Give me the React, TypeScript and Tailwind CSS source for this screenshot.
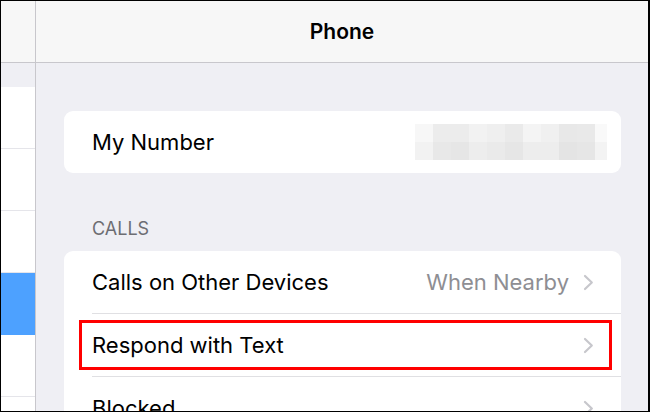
import { ReactNode } from "react";

const blurTop = ["#f7f7f7", "#ececec", "#ececec", "#f2f2f2", "#efefef", "#eaeaea", "#f4f4f4", "#f0f0f0", "#e8e8e8", "#e9e9e9", "#f9f9f9"];
const blurBottom = ["#f2f2f2", "#e8e8e8", "#e6e6e6", "#ededed", "#eaeaea", "#e6e6e6", "#ededed", "#ededed", "#e4e4e4", "#e6e6e6", "#f3f3f3"];

const Chevron = () => (
  <svg width="11" height="17" viewBox="0 0 11 17" fill="none" className="shrink-0">
    <path d="M2 2 L8.8 8.5 L2 15" stroke="#c7c7cc" strokeWidth="2.2" strokeLinecap="round" strokeLinejoin="round" />
  </svg>
);

const Row = ({ label, value, children }: { label: string; value?: string; children?: ReactNode }) => (
  <div className="relative flex h-[62px] items-center justify-between pl-[28px] pr-[27px]">
    <span className="text-[22px] text-black">{label}</span>
    <div className="flex items-center gap-[14px]">
      {value && <span className="text-[22px] text-[#8e8e93]">{value}</span>}
      <Chevron />
    </div>
    {children}
  </div>
);

const Separator = () => <div className="ml-[28px] h-px bg-[#e0e0e3]" />;

export default function App() {
  return (
    <div
      className="flex h-[412px] w-[650px] overflow-hidden border-y border-l border-r-2 border-black bg-[#efeff4]"
      style={{ fontFamily: "Inter, 'Liberation Sans', sans-serif" }}
    >
      {/* sidebar */}
      <div className="flex w-[35px] shrink-0 flex-col border-r border-[#c8c7cc] bg-white">
        <div className="h-[62px] shrink-0 border-b border-[#c8c7cc] bg-[#f7f7f7]" />
        <div className="h-[24px] shrink-0 bg-[#efeff4]" />
        <div className="h-[62px] shrink-0 border-b border-[#e5e5ea]" />
        <div className="h-[62px] shrink-0 border-b border-[#e5e5ea]" />
        <div className="h-[62px] shrink-0 border-b border-[#e5e5ea]" />
        <div className="h-[62px] shrink-0 bg-[#4da1ff]" />
        <div className="h-[62px] shrink-0 border-b border-[#e5e5ea]" />
      </div>

      {/* main panel */}
      <div className="flex flex-1 flex-col">
        <div className="flex h-[62px] shrink-0 items-center justify-center border-b border-[#c8c7cc] bg-[#f7f7f7]">
          <span className="text-[21px] font-semibold text-black">Phone</span>
        </div>

        <div className="pl-[28px] pr-[27px] pt-[48px]">
          <div className="flex h-[62px] items-center justify-between rounded-[9px] bg-white pl-[28px] pr-[14px]">
            <span className="text-[22px] text-black">My Number</span>
            <div className="flex flex-col">
              <div className="flex">
                {blurTop.map((c, i) => (
                  <div key={i} className={i === 10 ? "h-[18px] w-[12px]" : "h-[18px] w-[18px]"} style={{ background: c }} />
                ))}
              </div>
              <div className="flex">
                {blurBottom.map((c, i) => (
                  <div key={i} className={i === 10 ? "h-[18px] w-[12px]" : "h-[18px] w-[18px]"} style={{ background: c }} />
                ))}
              </div>
            </div>
          </div>

          <div className="pb-[12px] pl-[28px] pt-[46px] text-[18px] leading-[20px] text-[#6d6d72]">CALLS</div>

          <div className="rounded-t-[9px] bg-white">
            <Row label="Calls on Other Devices" value="When Nearby" />
            <Separator />
            <Row label="Respond with Text">
              <div className="absolute bottom-[6px] left-[15px] right-[9px] top-[6px] border-[3px] border-[#ff0000]" />
            </Row>
            <Separator />
            <Row label="Blocked" />
          </div>
        </div>
      </div>
    </div>
  );
}
